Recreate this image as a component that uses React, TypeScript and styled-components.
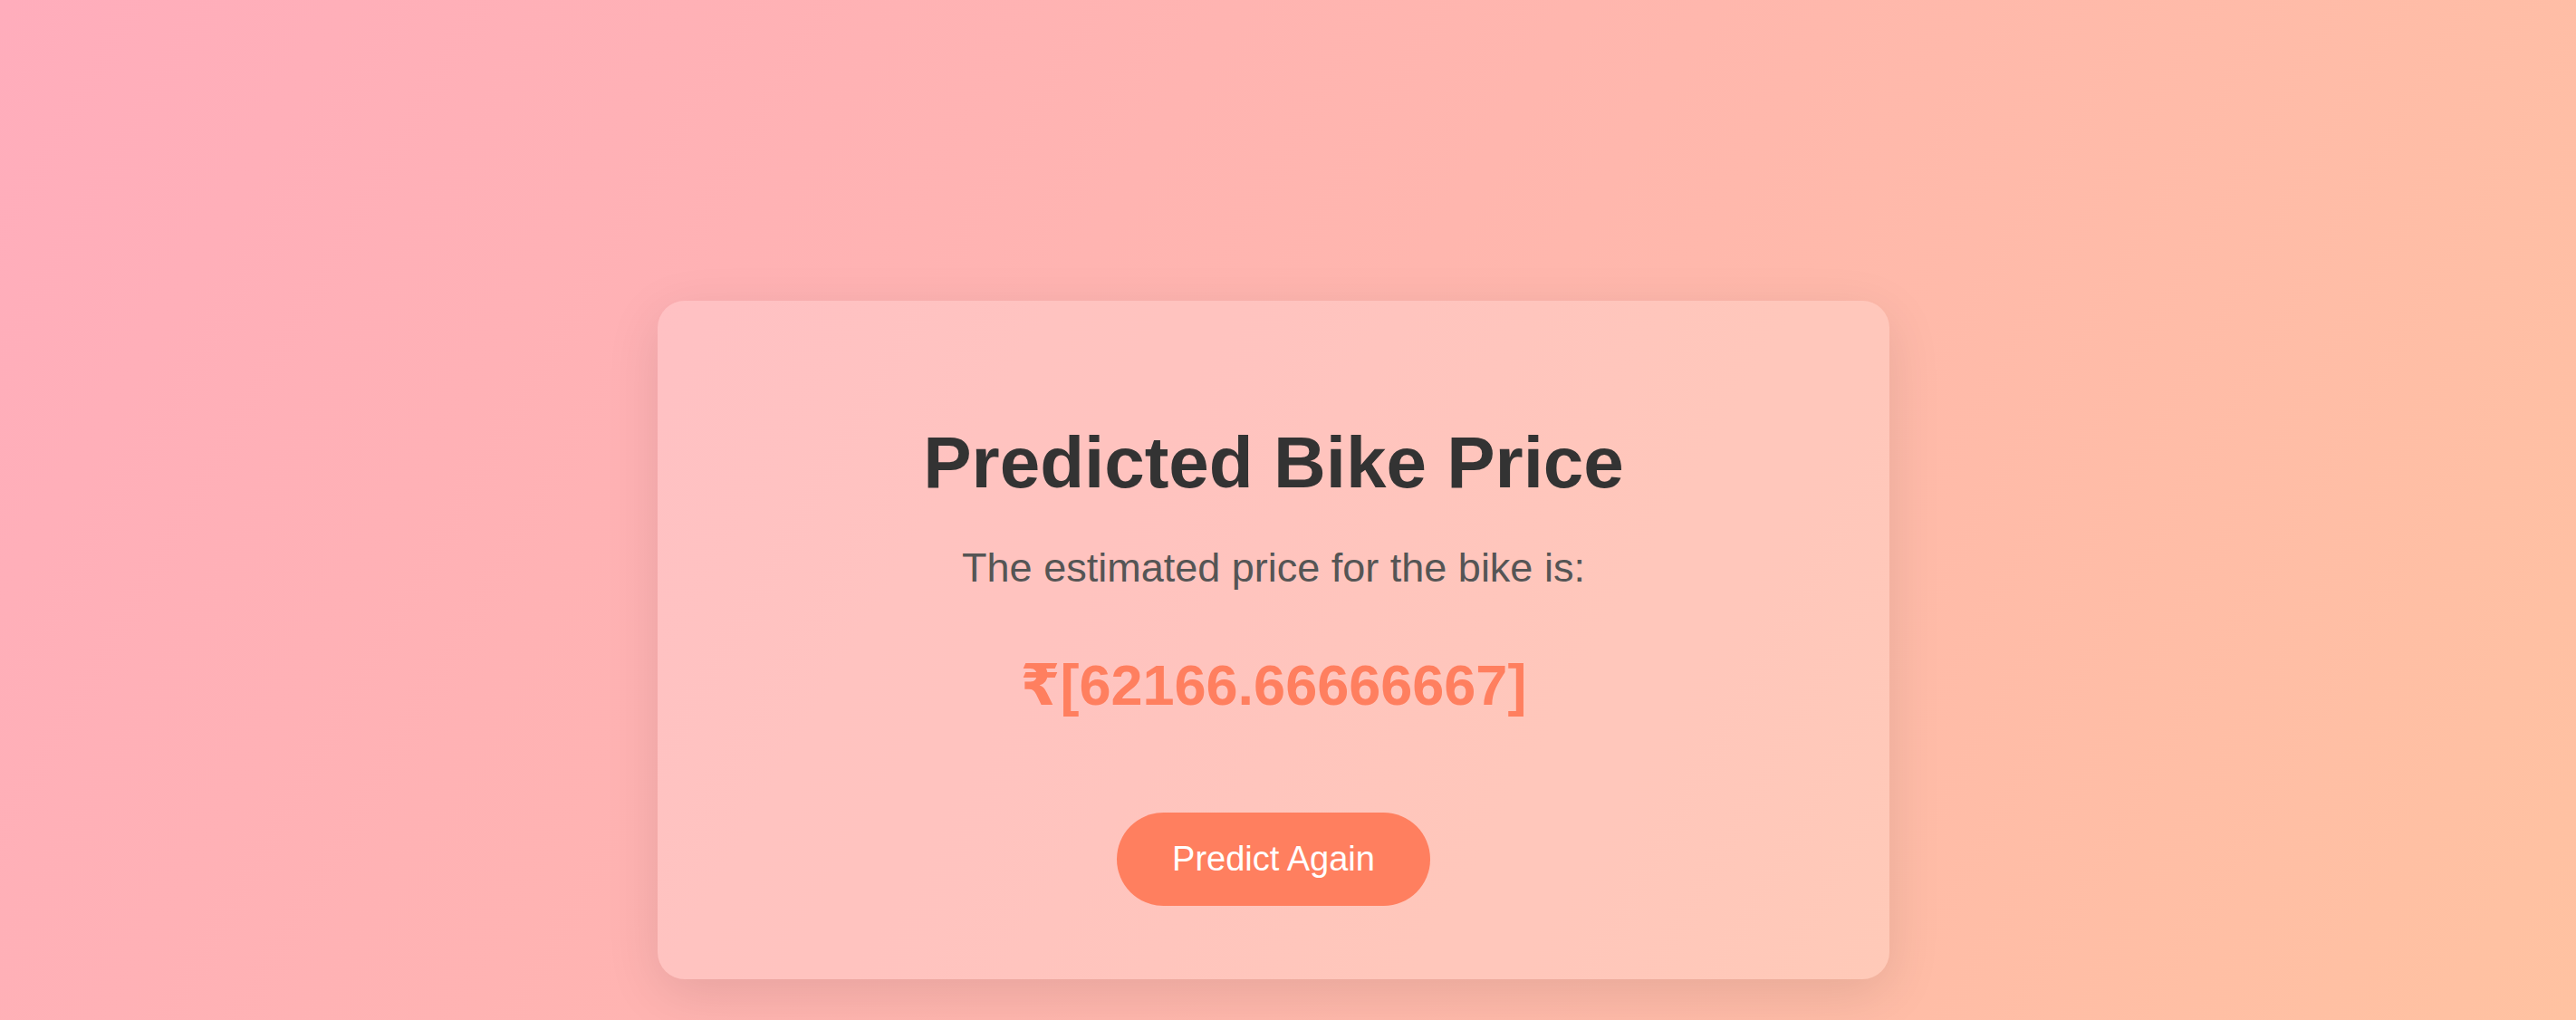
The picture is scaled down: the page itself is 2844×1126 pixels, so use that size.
import React from "react";
import styled, { createGlobalStyle } from "styled-components";

const GlobalStyle = createGlobalStyle`
  html, body {
    margin: 0;
    padding: 0;
    height: 100%;
  }
  body {
    font-family: "Liberation Sans", Helvetica, Arial, "DejaVu Sans", sans-serif;
    background: linear-gradient(120deg, #ffadbc 0%, #ffb6ae 50%, #ffc2a1 100%);
    min-height: 1126px;
    overflow: hidden;
  }
`;

const Page = styled.main`
  width: 100%;
  min-height: 1126px;
  box-sizing: border-box;
  padding: 332px 32px 0 0;
  display: flex;
  justify-content: center;
  align-items: flex-start;
`;

const Card = styled.section`
  width: 1360px;
  height: 749px;
  box-sizing: border-box;
  padding: 133px 0 0;
  border-radius: 30px;
  background: rgba(255, 255, 255, 0.2);
  box-shadow: 0 16px 60px rgba(0, 0, 0, 0.1);
  display: flex;
  flex-direction: column;
  align-items: center;
  text-align: center;
`;

const Title = styled.h1`
  margin: 0;
  font-size: 80px;
  line-height: 92px;
  font-weight: 700;
  color: #333333;
`;

const Subtitle = styled.p`
  margin: 44px 0 0;
  font-size: 45px;
  line-height: 52px;
  color: #555555;
`;

const Price = styled.p`
  margin: 66px 0 0;
  font-size: 63px;
  line-height: 74px;
  font-weight: 700;
  color: #ff7f5f;
`;

const Button = styled.button`
  margin-top: 104px;
  width: 346px;
  height: 103px;
  border: none;
  border-radius: 52px;
  background: #ff7f5f;
  color: #ffffff;
  font-family: inherit;
  font-size: 38px;
  cursor: pointer;
`;

export default function App() {
  return (
    <>
      <GlobalStyle />
      <Page>
        <Card>
          <Title>Predicted Bike Price</Title>
          <Subtitle>The estimated price for the bike is:</Subtitle>
          <Price>₹[62166.66666667]</Price>
          <Button>Predict Again</Button>
        </Card>
      </Page>
    </>
  );
}
